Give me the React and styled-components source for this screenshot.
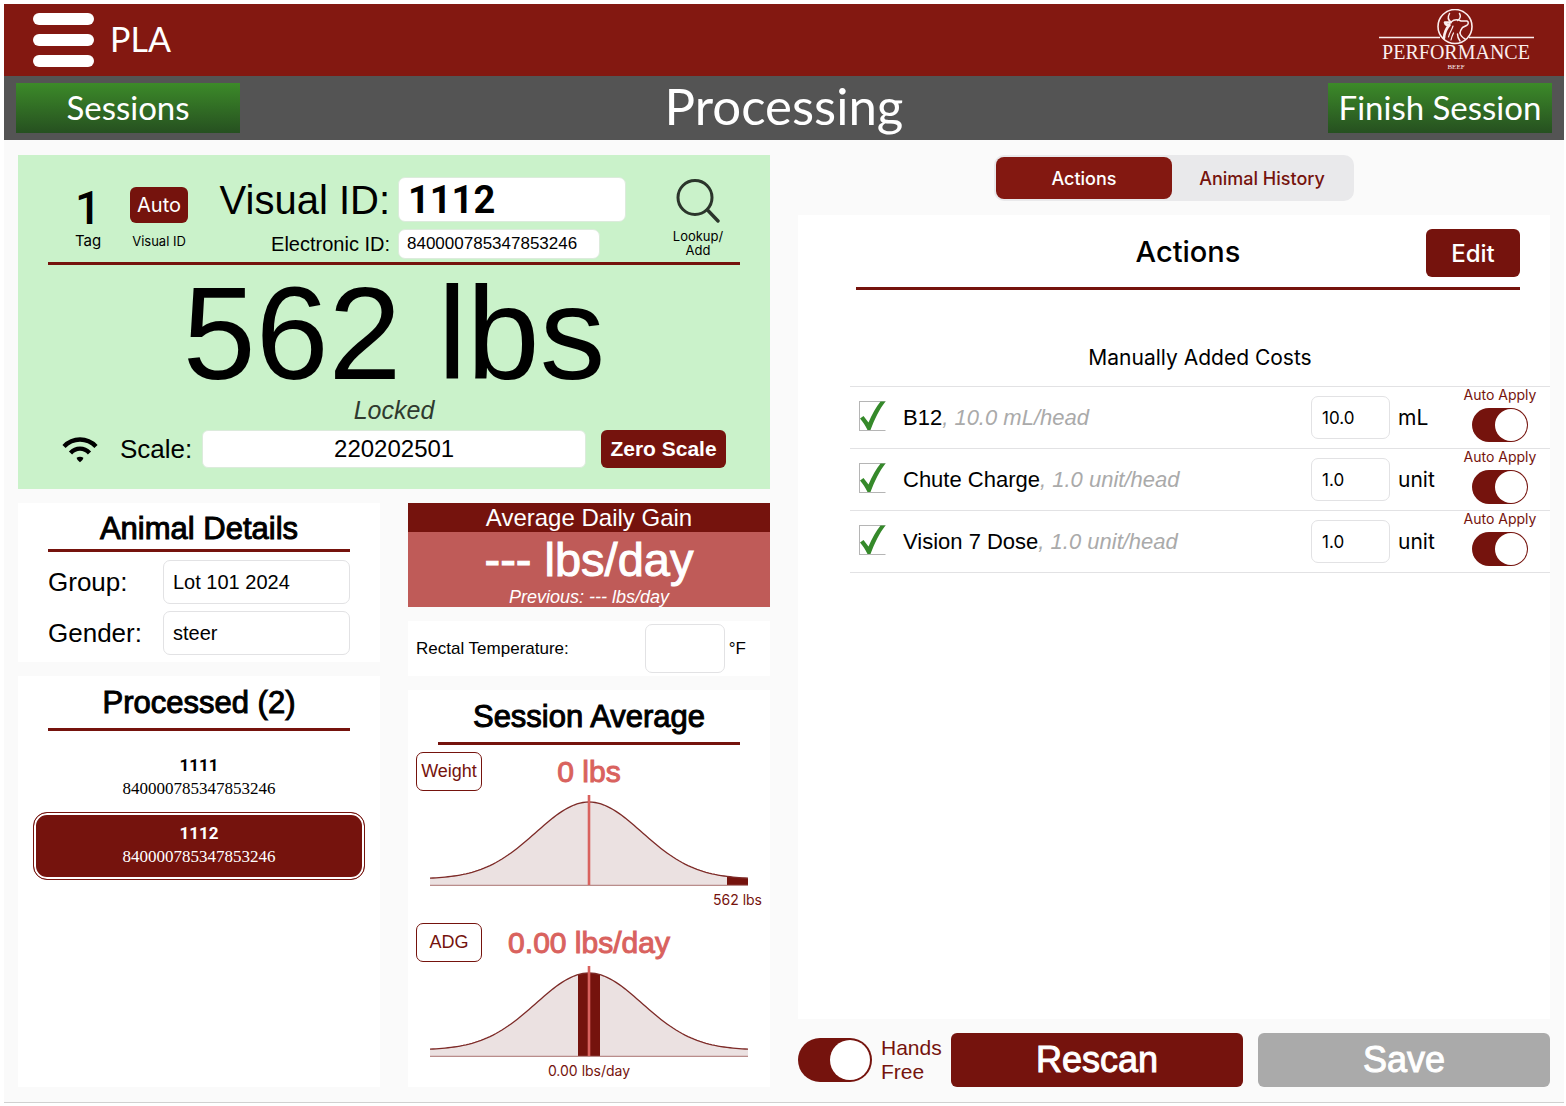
import { useState } from 'react'
import styled, { createGlobalStyle, css, ThemeProvider } from 'styled-components'

const theme = {
	PALETTE: {
		primary: '#75130d',
		header: '#831811',
		gray: { 100: '#fafafa', 200: '#e2e2e4', 300: '#aaaaaa', 700: '#545454' },
		accent: '#d9625e',
		locked: '#caf2ca',
	},
	FONT: {
		base: '"Liberation Sans", Helvetica, Arial, sans-serif',
		system: 'Inter, "Liberation Sans", sans-serif',
		number: 'Roboto, "Liberation Sans", sans-serif',
		title: 'Lato, "Open Sans", sans-serif',
		serif: '"Liberation Serif", "Times New Roman", serif',
	},
}

const GlobalStyle = createGlobalStyle`
	* {
		box-sizing: border-box;
	}
	body {
		margin: 0;
		background: #fff;
		color: #000;
		font-family: ${theme.FONT.base};
	}
	h1, h2, h3, p, ul {
		margin: 0;
		padding: 0;
	}
	ul {
		list-style: none;
	}
	button, input {
		font-family: inherit;
		margin: 0;
	}
	button {
		border: 0;
		padding: 0;
		cursor: pointer;
	}
	svg {
		flex-shrink: 0;
	}
`

// in-between weight, the family only has regular and bold
const medium = css`
	font-weight: 400;
	-webkit-text-stroke: 1px currentColor;
`

const redButton = css`
	background: ${({ theme }) => theme.PALETTE.primary};
	color: #fff;
`

const fieldBox = css`
	border: 1px solid ${({ theme }) => theme.PALETTE.gray[200]};
	border-radius: 7px;
	background: #fff;
`

const Page = styled.div`
	display: flex;
	min-height: 100vh;
	padding: 4px 2px 4px 4px;
`

const Screen = styled.div`
	display: flex;
	flex-direction: column;
	flex: 1;
	min-width: 0;
	background: ${({ theme }) => theme.PALETTE.gray[100]};
	border-bottom: 1px solid #d0d0d0;
`

const TopBar = styled.header`
	display: flex;
	align-items: center;
	gap: 16px;
	height: 72px;
	padding: 0 30px 0 29px;
	background: ${({ theme }) => theme.PALETTE.header};
	color: #fff;
`

const MenuButton = styled.button`
	display: flex;
	flex-direction: column;
	gap: 9px;
	width: 61px;
	background: none;
`

const MenuLine = styled.span`
	height: 12px;
	border-radius: 6px;
	background: #fff;
`

const Location = styled.span`
	flex: 1;
	padding-bottom: 4px;
	font-family: ${({ theme }) => theme.FONT.title};
	font-size: 34px;
	font-weight: 400;
`

const LogoText = styled.text`
	fill: #fbeeee;
	font-family: ${({ theme }) => theme.FONT.serif};
	font-size: ${({ $size }) => $size}px;
	text-anchor: middle;
`

const SubBar = styled.div`
	display: grid;
	grid-template-columns: 1fr auto 1fr;
	align-items: center;
	height: 64px;
	padding: 0 12px;
	background: ${({ theme }) => theme.PALETTE.gray[700]};
`

const NavButton = styled.button`
	justify-self: ${({ $end }) => ($end ? 'end' : 'start')};
	width: 224px;
	height: 50px;
	padding-bottom: 3px;
	background: linear-gradient(#3c8a29, #265020);
	color: #fff;
	font-family: ${({ theme }) => theme.FONT.title};
	font-size: 33px;
	font-weight: 400;
`

const PageTitle = styled.h1`
	padding-bottom: 4px;
	color: #fff;
	font-family: ${({ theme }) => theme.FONT.title};
	font-size: 51px;
	font-weight: 400;
	line-height: 60px;
`

const Main = styled.main`
	display: grid;
	grid-template-columns: repeat(2, minmax(0, 1fr));
	gap: 28px;
	flex: 1;
	padding: 15px 14px;
`

const Column = styled.div`
	display: flex;
	flex-direction: column;
	gap: 14px;
	min-width: 0;
`

const Halves = styled.div`
	display: grid;
	grid-template-columns: repeat(2, minmax(0, 1fr));
	gap: 28px;
	flex: 1;
`

const Card = styled.section`
	background: #fff;
	flex: ${({ $grow }) => ($grow ? '1' : 'none')};
`

const CardTitle = styled.h2`
	${medium}
	margin: 0 30px;
	padding: ${({ $tight }) => ($tight ? '8px 0 2px' : '9px 0 7px')};
	border-bottom: 3px solid ${({ theme }) => theme.PALETTE.primary};
	font-size: 31px;
	line-height: 36px;
	text-align: center;
`

const AnimalCard = styled.section`
	padding-bottom: 21px;
	background: ${({ theme }) => theme.PALETTE.locked};
`

const IdRow = styled.div`
	display: grid;
	grid-template-columns: 80px 62px minmax(0, 1fr) 84px;
	align-items: end;
	margin: 0 30px;
	padding-top: 22px;
	border-bottom: 3px solid ${({ theme }) => theme.PALETTE.primary};
`

const IdColumn = styled.div`
	display: flex;
	flex-direction: column;
	align-items: center;
	gap: ${({ $gap }) => $gap || 0}px;
	padding-bottom: 11px;
`

const TagNumber = styled.span`
	font-family: ${({ theme }) => theme.FONT.number};
	font-size: 46px;
	font-weight: 500;
	line-height: 46px;
`

const Caption = styled.span`
	font-family: ${({ theme }) => theme.FONT.system};
	font-size: ${({ $small }) => ($small ? 13 : 15)}px;
	line-height: 20px;
`

const AutoButton = styled.button`
	${redButton}
	width: 58px;
	height: 36px;
	border-radius: 6px;
	font-family: ${({ theme }) => theme.FONT.system};
	font-size: 20px;
`

const IdFields = styled.div`
	display: grid;
	grid-template-columns: minmax(0, 1fr) 228px;
	align-items: center;
	gap: 7px 8px;
	padding: 0 30px 3px 0;
`

const VisualLabel = styled.label`
	font-size: 40px;
	line-height: 44px;
	text-align: right;
`

const ElectronicLabel = styled.label`
	font-size: 20px;
	text-align: right;
`

const VisualInput = styled.input`
	width: 100%;
	height: 45px;
	padding: 0 9px;
	border: 1px solid #dcebdc;
	border-radius: 7px;
	background: #fff;
	font-family: ${({ theme }) => theme.FONT.number};
	font-size: 38px;
	font-weight: 700;
`

const ElectronicInput = styled.input`
	width: 202px;
	height: 30px;
	padding: 0 8px;
	border: 1px solid #dcebdc;
	border-radius: 7px;
	background: #fff;
	font-size: 17px;
`

const LookupButton = styled.button`
	display: flex;
	flex-direction: column;
	align-items: center;
	gap: 6px;
	padding-bottom: 5px;
	background: none;
	font-family: ${({ theme }) => theme.FONT.system};
	font-size: 13px;
	line-height: 14px;
`

const Weight = styled.p`
	padding-top: 4px;
	font-size: 131px;
	line-height: 129px;
	text-align: center;
`

const Locked = styled.p`
	color: #2f3a2f;
	font-size: 25px;
	font-style: italic;
	line-height: 25px;
	text-align: center;
`

const ScaleRow = styled.div`
	display: flex;
	align-items: center;
	padding: 7px 44px 0;
`

const ScaleLabel = styled.label`
	margin: 0 10px 0 22px;
	font-size: 26px;
`

const ScaleInput = styled.input`
	flex: 1;
	min-width: 0;
	height: 38px;
	border: 1px solid #dcebdc;
	border-radius: 6px;
	background: #fff;
	font-size: 24px;
	text-align: center;
`

const ZeroButton = styled.button`
	${redButton}
	width: 125px;
	height: 38px;
	margin-left: 15px;
	border-radius: 6px;
	font-size: 21px;
	font-weight: 700;
`

const Details = styled.div`
	display: grid;
	grid-template-columns: 115px minmax(0, 1fr);
	align-items: center;
	row-gap: 7px;
	padding: 8px 30px 7px;
`

const DetailLabel = styled.label`
	font-size: 26px;
`

const DetailInput = styled.input`
	${fieldBox}
	width: 100%;
	height: 44px;
	padding: 0 9px;
	font-size: 20px;
`

const ProcessedList = styled.ul`
	padding: 13px 15px 0;
`

const ProcessedButton = styled.button`
	display: flex;
	flex-direction: column;
	align-items: center;
	width: 100%;
	height: 68px;
	padding: 9px 0 0;
	border: 1px solid ${({ theme, $active }) => ($active ? theme.PALETTE.primary : 'transparent')};
	border-radius: 14px;
	background: ${({ theme, $active }) => ($active ? theme.PALETTE.primary : '#fff')};
	box-shadow: inset 0 0 0 2px #fff;
	color: ${({ $active }) => ($active ? '#fff' : '#000')};
	line-height: 23px;
`

const ProcessedTag = styled.span`
	font-family: ${({ theme }) => theme.FONT.number};
	font-size: 17px;
	font-weight: 700;
`

const ProcessedEid = styled.span`
	font-family: ${({ theme }) => theme.FONT.serif};
	font-size: 17px;
`

const Gain = styled.section`
	background: #bf5b58;
	color: #fff;
	text-align: center;
`

const GainTitle = styled.h2`
	background: ${({ theme }) => theme.PALETTE.primary};
	font-size: 24px;
	font-weight: 400;
	line-height: 29px;
`

const GainValue = styled.p`
	${medium}
	font-size: 47px;
	line-height: 55px;
`

const GainPrevious = styled.p`
	font-size: 18px;
	font-style: italic;
	line-height: 20px;
`

const TempCard = styled.section`
	display: flex;
	align-items: center;
	gap: 4px;
	height: 55px;
	padding: 0 24px 0 8px;
	background: #fff;
	font-size: 17px;
`

const TempLabel = styled.label`
	flex: 1;
`

const TempInput = styled.input`
	${fieldBox}
	width: 80px;
	height: 49px;
`

const Stat = styled.div`
	padding: 7px 8px 6px;
`

const StatHead = styled.div`
	display: grid;
	grid-template-columns: 66px minmax(0, 1fr) 66px;
	align-items: center;
	margin-bottom: 4px;
`

const StatButton = styled.button`
	height: 39px;
	border: 1px solid ${({ theme }) => theme.PALETTE.primary};
	border-radius: 7px;
	background: #fff;
	color: ${({ theme }) => theme.PALETTE.primary};
	font-size: 18px;
`

const StatValue = styled.p`
	${medium}
	color: ${({ theme }) => theme.PALETTE.accent};
	font-size: 30px;
	line-height: 36px;
	text-align: center;
	white-space: nowrap;
`

const Chart = styled.svg`
	display: block;
	width: calc(100% - 28px);
	margin: 0 14px;
`

const StatNote = styled.p`
	margin-top: 4px;
	color: ${({ theme }) => theme.PALETTE.primary};
	font-family: ${({ theme }) => theme.FONT.system};
	font-size: 14px;
	line-height: 20px;
	text-align: ${({ $align }) => $align};
`

const Tabs = styled.div`
	display: grid;
	grid-template-columns: 176px 1fr;
	align-self: center;
	width: 360px;
	height: 46px;
	padding: 2px;
	border-radius: 10px;
	background: #e9e9eb;
`

const Tab = styled.button`
	border-radius: 8px;
	background: ${({ theme, $active }) => ($active ? theme.PALETTE.header : 'transparent')};
	color: ${({ theme, $active }) => ($active ? '#fff' : theme.PALETTE.primary)};
	font-family: ${({ theme }) => theme.FONT.system};
	font-size: 18px;
	font-weight: 500;
`

const ActionsHead = styled.div`
	display: grid;
	grid-template-columns: 1fr auto 1fr;
	align-items: center;
	margin: 0 30px 0 58px;
	padding: 14px 0 10px;
	border-bottom: 3px solid ${({ theme }) => theme.PALETTE.primary};
`

const ActionsTitle = styled.h2`
	grid-column: 2;
	padding-bottom: 4px;
	font-family: ${({ theme }) => theme.FONT.system};
	font-size: 29px;
	font-weight: 500;
`

const EditButton = styled.button`
	${redButton}
	justify-self: end;
	width: 94px;
	height: 48px;
	border-radius: 6px;
	font-family: ${({ theme }) => theme.FONT.system};
	font-size: 24px;
	font-weight: 500;
`

const Costs = styled.div`
	margin-left: 52px;
`

const CostsTitle = styled.h3`
	padding: 54px 0 14px;
	font-family: ${({ theme }) => theme.FONT.system};
	font-size: 21px;
	font-weight: 400;
	line-height: 28px;
	text-align: center;
`

const CostList = styled.ul`
	border-top: 1px solid ${({ theme }) => theme.PALETTE.gray[200]};
`

const CostItem = styled.li`
	display: grid;
	grid-template-columns: 36px minmax(0, 1fr) 79px 58px 72px;
	align-items: center;
	column-gap: 8px;
	min-height: 62px;
	padding: 0 14px 0 9px;
	border-bottom: 1px solid ${({ theme }) => theme.PALETTE.gray[200]};
`

const CheckLabel = styled.label`
	display: grid;
	justify-items: start;
	padding-bottom: 4px;
`

const CheckInput = styled.input`
	appearance: none;
	grid-area: 1 / 1;
	width: 27px;
	height: 30px;
	border: 1px solid #b5b5b5;
	border-right-color: transparent;
`

const CheckMark = styled.svg`
	grid-area: 1 / 1;
	pointer-events: none;
`

const CostName = styled.span`
	font-size: 22px;
`

const CostRate = styled.span`
	color: ${({ theme }) => theme.PALETTE.gray[300]};
	font-style: italic;
`

const AmountInput = styled.input`
	${fieldBox}
	width: 100%;
	height: 43px;
	padding: 0 10px;
	font-family: ${({ theme }) => theme.FONT.system};
	font-size: 17px;
`

const Unit = styled.span`
	font-family: ${({ theme }) => theme.FONT.system};
	font-size: 21px;
`

const AutoApply = styled.label`
	display: flex;
	flex-direction: column;
	align-items: center;
	align-self: start;
	gap: 5px;
	color: ${({ theme }) => theme.PALETTE.primary};
	font-family: ${({ theme }) => theme.FONT.system};
	font-size: 14px;
	line-height: 16px;
	white-space: nowrap;
`

const Toggle = styled.input`
	appearance: none;
	display: flex;
	flex-shrink: 0;
	align-items: center;
	justify-content: ${({ checked }) => (checked ? 'flex-end' : 'flex-start')};
	width: ${({ $large }) => ($large ? 74 : 56)}px;
	height: ${({ $large }) => ($large ? 44 : 34)}px;
	padding: ${({ $large }) => ($large ? 2 : 1)}px;
	border-radius: 22px;
	background: ${({ theme, checked }) => (checked ? theme.PALETTE.primary : theme.PALETTE.gray[300])};
	cursor: pointer;

	&::before {
		content: '';
		height: 100%;
		aspect-ratio: 1;
		border-radius: 50%;
		background: #fff;
	}
`

const Footer = styled.footer`
	display: flex;
	align-items: center;
`

const HandsFree = styled.label`
	display: flex;
	align-items: center;
	gap: 9px;
	width: 153px;
	color: ${({ theme }) => theme.PALETTE.primary};
	font-size: 21px;
	line-height: 24px;
`

const FooterButtons = styled.div`
	display: grid;
	grid-template-columns: 1fr 1fr;
	gap: 15px;
	flex: 1;
`

const BigButton = styled.button`
	${medium}
	height: 54px;
	border-radius: 6px;
	background: ${({ theme, $muted }) => ($muted ? theme.PALETTE.gray[300] : theme.PALETTE.primary)};
	color: #fff;
	font-size: 36px;
`

const COSTS = [
	{ id: 1, name: 'B12', rate: '10.0 mL/head', amount: '10.0', unit: 'mL' },
	{ id: 2, name: 'Chute Charge', rate: '1.0 unit/head', amount: '1.0', unit: 'unit' },
	{ id: 3, name: 'Vision 7 Dose', rate: '1.0 unit/head', amount: '1.0', unit: 'unit' },
]

const PROCESSED = [
	{ tag: '1111', eid: '840000785347853246' },
	{ tag: '1112', eid: '840000785347853246' },
]

const CHART_W = 318
const CHART_H = 91

const curvePoints = () => {
	const points = []
	for (let x = 0; x <= CHART_W; x += 3) {
		const d = x - CHART_W / 2
		const y = 84 - 77 * Math.exp(-(d * d) / (2 * 53 * 53))
		points.push(`${x},${y.toFixed(2)}`)
	}
	return points.join(' L')
}

function BellChart({ id, from, to }) {
	const line = `M${curvePoints()}`
	const area = `${line} L${CHART_W},90 L0,90 Z`

	return (
		<Chart viewBox={`0 0 ${CHART_W} ${CHART_H}`} aria-hidden="true">
			<clipPath id={id}>
				<path d={area} />
			</clipPath>
			<path d={area} fill="#ebe1e1" />
			<rect
				x={from}
				y="0"
				width={to - from}
				height="90"
				fill="#75130d"
				clipPath={`url(#${id})`}
			/>
			<path d={line} fill="none" stroke="#7d2a27" strokeWidth="1.3" />
			<path d={`M0,90.3 H${CHART_W}`} stroke="#a8716f" strokeWidth="1" />
			<path d="M159,0 V90" stroke="#d9625e" strokeWidth="2.6" />
		</Chart>
	)
}

function Logo() {
	return (
		<svg width="156" height="62" viewBox="0 0 156 62" role="img" aria-label="Performance Beef">
			<g fill="none" stroke="#fbeeee" strokeLinecap="round" strokeLinejoin="round">
				<path d="M1 28.5 H62 M91 28.5 H156" strokeWidth="1.3" strokeLinecap="butt" />
				<circle cx="77" cy="17.5" r="17" strokeWidth="1.6" />
				<path d="M73 13 C70 11 69.500 8 71.500 4.500 M79.500 11.500 C82.500 9.500 83 7 81.500 4.500" strokeWidth="1.5" />
				<path d="M73 13 C76 10.500 80 10.500 83 12 L89 12 C91 13 90.500 15.500 88.500 16.500 L84.500 18.500 C83 20.500 82 22 82 24" strokeWidth="1.5" />
				<path d="M72.500 13.500 L67 13.500 C67.500 16 69.500 16.500 71.500 16 C68.500 19 66.500 23 66 29" strokeWidth="2.6" />
				<path d="M75 17 C74 21 71.500 23 70.500 28 M75.500 24 C74 27 73.500 28.500 73 31" strokeWidth="1.2" />
				<path d="M82 24 C82.500 27 84.500 28.500 87 30 M79.500 25 C79.500 28 80.500 30 82 32" strokeWidth="1.5" />
			</g>
			<LogoText x="78" y="50" $size={20}>
				PERFORMANCE
			</LogoText>
			<LogoText x="78" y="60" $size={7}>
				BEEF
			</LogoText>
		</svg>
	)
}

function WifiIcon() {
	return (
		<svg width="36" height="27" viewBox="0 0 36 27" aria-hidden="true">
			<g fill="none" stroke="#000" strokeWidth="4.4">
				<path d="M2 10.500 C11 1.200 25 1.200 34 10.500" />
				<path d="M8.500 17 C14 11.200 22 11.200 27.500 17" />
			</g>
			<path d="M14.600 21.800 C16.600 20.300 19.400 20.300 21.400 21.800 C21.200 23.500 19.500 25 18 26.200 C16.500 25 14.800 23.500 14.600 21.800 Z" />
		</svg>
	)
}

function SearchIcon() {
	return (
		<svg width="44" height="44" viewBox="0 0 44 44" aria-hidden="true">
			<g fill="none" stroke="#2b352b" strokeLinecap="round">
				<circle cx="19" cy="18.500" r="17" strokeWidth="3" />
				<path d="M31.500 31 L42 42" strokeWidth="3.4" />
			</g>
		</svg>
	)
}

function CostRow({ cost }) {
	const [checked, setChecked] = useState(true)
	const [auto, setAuto] = useState(true)
	const [amount, setAmount] = useState(cost.amount)

	return (
		<CostItem>
			<CheckLabel>
				<CheckInput
					type="checkbox"
					aria-label={cost.name}
					checked={checked}
					onChange={() => setChecked(prev => !prev)}
				/>
				{checked && (
					<CheckMark width="28" height="30" viewBox="0 0 28 30" aria-hidden="true">
						<path
							d="M1 17.500 L4.500 15 L9.500 21.500 C13 13 17 6 21.500 0.500 L26.500 0.500 C20.500 8 15.500 18 11.500 29 L8.500 29 C6.500 25 4 21 1 17.500 Z"
							fill="#35892a"
						/>
					</CheckMark>
				)}
			</CheckLabel>
			<CostName>
				{cost.name}
				<CostRate>, {cost.rate}</CostRate>
			</CostName>
			<AmountInput
				aria-label={`${cost.name} amount`}
				value={amount}
				onChange={e => setAmount(e.target.value)}
			/>
			<Unit>{cost.unit}</Unit>
			<AutoApply>
				Auto Apply
				<Toggle type="checkbox" checked={auto} onChange={() => setAuto(prev => !prev)} />
			</AutoApply>
		</CostItem>
	)
}

function App() {
	const [tab, setTab] = useState('Actions')
	const [selected, setSelected] = useState('1112')
	const [handsFree, setHandsFree] = useState(true)

	return (
		<ThemeProvider theme={theme}>
			<GlobalStyle />
			<Page>
				<Screen>
					<TopBar>
						<MenuButton aria-label="Menu">
							<MenuLine />
							<MenuLine />
							<MenuLine />
						</MenuButton>
						<Location>PLA</Location>
						<Logo />
					</TopBar>
					<SubBar>
						<NavButton>Sessions</NavButton>
						<PageTitle>Processing</PageTitle>
						<NavButton $end>Finish Session</NavButton>
					</SubBar>

					<Main>
						<Column>
							<AnimalCard>
								<IdRow>
									<IdColumn>
										<TagNumber>1</TagNumber>
										<Caption>Tag</Caption>
									</IdColumn>
									<IdColumn $gap={8}>
										<AutoButton>Auto</AutoButton>
										<Caption $small>Visual ID</Caption>
									</IdColumn>
									<IdFields>
										<VisualLabel htmlFor="visual">Visual ID:</VisualLabel>
										<VisualInput id="visual" defaultValue="1112" />
										<ElectronicLabel htmlFor="electronic">Electronic ID:</ElectronicLabel>
										<ElectronicInput id="electronic" defaultValue="840000785347853246" />
									</IdFields>
									<LookupButton>
										<SearchIcon />
										<span>
											Lookup/
											<br />
											Add
										</span>
									</LookupButton>
								</IdRow>
								<Weight>562 lbs</Weight>
								<Locked>Locked</Locked>
								<ScaleRow>
									<WifiIcon />
									<ScaleLabel htmlFor="scale">Scale:</ScaleLabel>
									<ScaleInput id="scale" defaultValue="220202501" />
									<ZeroButton>Zero Scale</ZeroButton>
								</ScaleRow>
							</AnimalCard>

							<Halves>
								<Column>
									<Card>
										<CardTitle $tight>Animal Details</CardTitle>
										<Details>
											<DetailLabel htmlFor="group">Group:</DetailLabel>
											<DetailInput id="group" defaultValue="Lot 101 2024" />
											<DetailLabel htmlFor="gender">Gender:</DetailLabel>
											<DetailInput id="gender" defaultValue="steer" />
										</Details>
									</Card>
									<Card $grow>
										<CardTitle>Processed (2)</CardTitle>
										<ProcessedList>
											{PROCESSED.map(item => (
												<li key={item.tag}>
													<ProcessedButton
														$active={selected === item.tag}
														onClick={() => setSelected(item.tag)}
													>
														<ProcessedTag>{item.tag}</ProcessedTag>
														<ProcessedEid>{item.eid}</ProcessedEid>
													</ProcessedButton>
												</li>
											))}
										</ProcessedList>
									</Card>
								</Column>

								<Column>
									<Gain>
										<GainTitle>Average Daily Gain</GainTitle>
										<GainValue>--- lbs/day</GainValue>
										<GainPrevious>Previous: --- lbs/day</GainPrevious>
									</Gain>
									<TempCard>
										<TempLabel htmlFor="temp">Rectal Temperature:</TempLabel>
										<TempInput id="temp" />
										<span>°F</span>
									</TempCard>
									<Card $grow>
										<CardTitle>Session Average</CardTitle>
										<Stat>
											<StatHead>
												<StatButton>Weight</StatButton>
												<StatValue>0 lbs</StatValue>
											</StatHead>
											<BellChart id="weight-area" from={297} to={318} />
											<StatNote $align="right">562 lbs</StatNote>
										</Stat>
										<Stat>
											<StatHead>
												<StatButton>ADG</StatButton>
												<StatValue>0.00 lbs/day</StatValue>
											</StatHead>
											<BellChart id="adg-area" from={148} to={170} />
											<StatNote $align="center">0.00 lbs/day</StatNote>
										</Stat>
									</Card>
								</Column>
							</Halves>
						</Column>

						<Column>
							<Tabs>
								{['Actions', 'Animal History'].map(name => (
									<Tab key={name} $active={tab === name} onClick={() => setTab(name)}>
										{name}
									</Tab>
								))}
							</Tabs>
							<Card $grow>
								<ActionsHead>
									<ActionsTitle>Actions</ActionsTitle>
									<EditButton>Edit</EditButton>
								</ActionsHead>
								<Costs>
									<CostsTitle>Manually Added Costs</CostsTitle>
									<CostList>
										{COSTS.map(cost => (
											<CostRow key={cost.id} cost={cost} />
										))}
									</CostList>
								</Costs>
							</Card>
							<Footer>
								<HandsFree>
									<Toggle
										$large
										type="checkbox"
										checked={handsFree}
										onChange={() => setHandsFree(prev => !prev)}
									/>
									<span>
										Hands
										<br />
										Free
									</span>
								</HandsFree>
								<FooterButtons>
									<BigButton>Rescan</BigButton>
									<BigButton $muted>Save</BigButton>
								</FooterButtons>
							</Footer>
						</Column>
					</Main>
				</Screen>
			</Page>
		</ThemeProvider>
	)
}
export default App
